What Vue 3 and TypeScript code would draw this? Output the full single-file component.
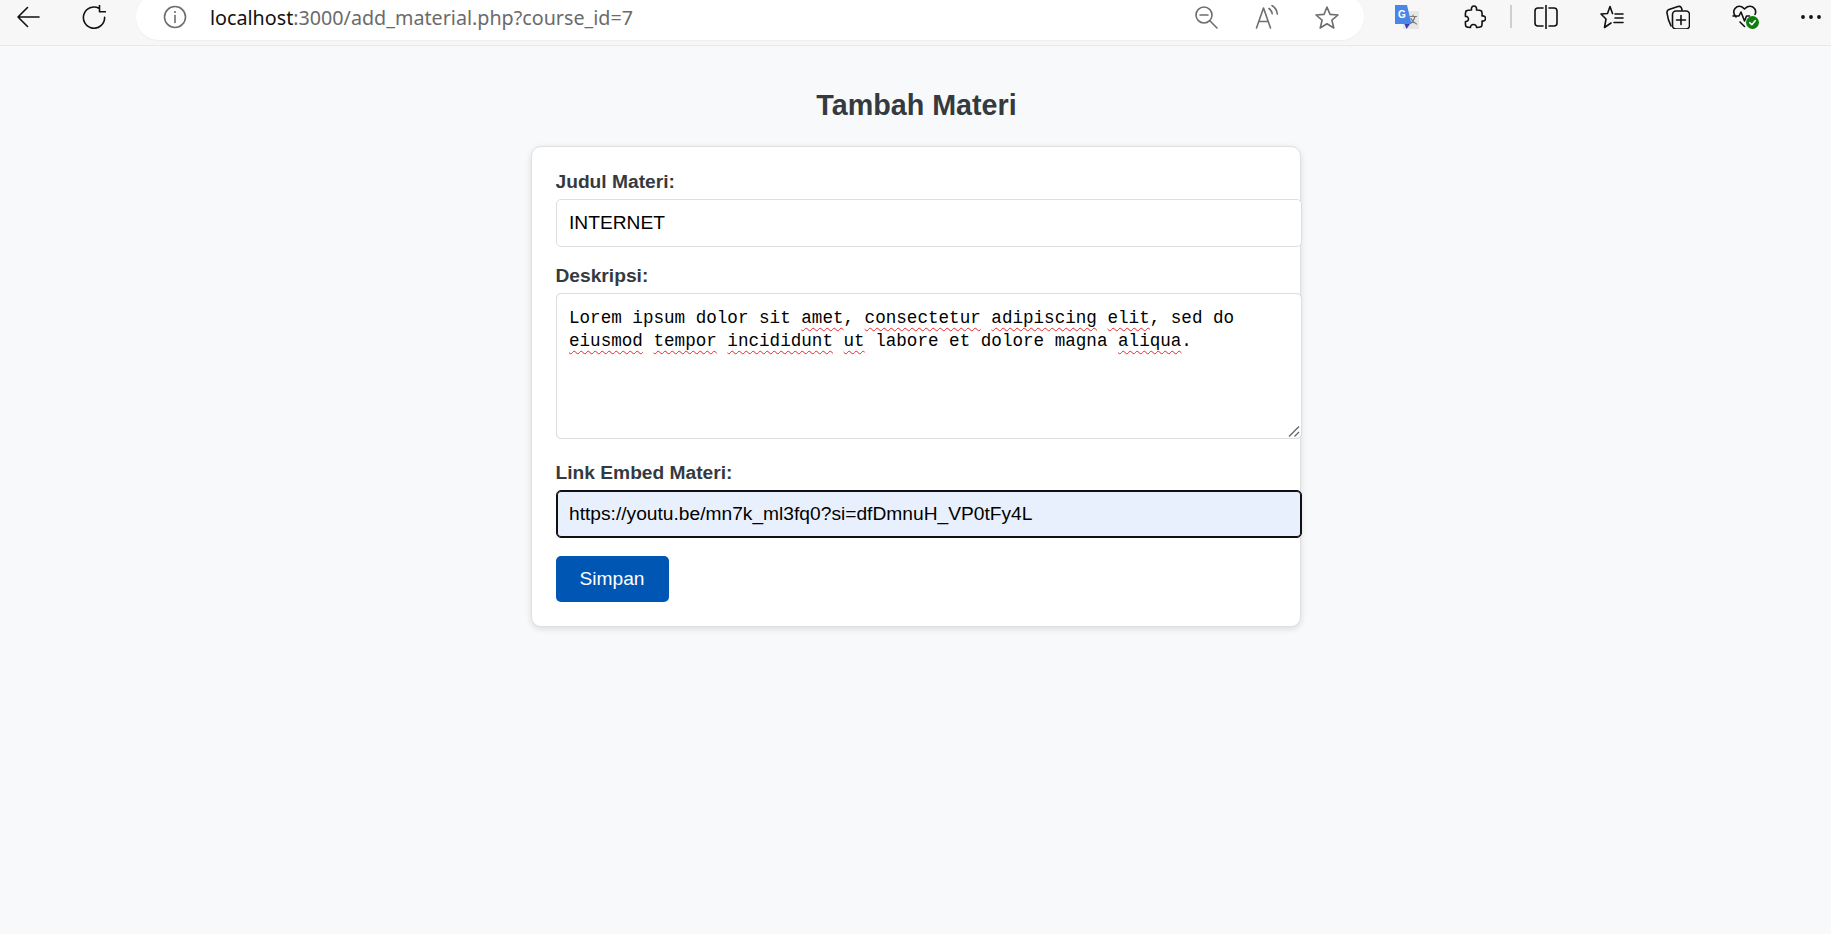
<script setup lang="ts">
import { ref } from 'vue'

const title = ref('INTERNET')
const link = ref('https://youtu.be/mn7k_ml3fq0?si=dfDmnuH_VP0tFy4L')
const description = ref('Lorem ipsum dolor sit amet, consectetur adipiscing elit, sed do eiusmod tempor incididunt ut labore et dolore magna aliqua.')
const misspelled = new Set(['amet', 'consectetur', 'adipiscing', 'elit', 'eiusmod', 'tempor', 'incididunt', 'ut', 'aliqua'])
const pieces = description.value.split(/(\b[a-zA-Z]+\b)/).map((text) => ({ text, bad: misspelled.has(text) }))
</script>

<template>
  <div class="page">
    <header class="toolbar">
      <svg class="ic back" viewBox="0 0 24 24"><path d="M23 12H2M11.500 2.500 2 12l9.500 9.500" /></svg>
      <svg class="ic reload" viewBox="0 0 24 24"><path d="M17 3.300A10.600 10.600 0 1 0 22.600 12.400M17.500 0v6.800h6" /></svg>
      <div class="pill">
        <svg class="ic info" viewBox="0 0 24 24"><circle cx="12" cy="12" r="10.500" /><path d="M12 10.500v7" /><circle class="dot" cx="12" cy="7" r="1.100" /></svg>
        <div class="url"><span class="host">localhost</span>:3000/add_material.php?course_id=7</div>
        <svg class="ic grey" viewBox="0 0 24 24"><circle cx="10" cy="10" r="8" /><path d="M6 10h8M15.800 15.800 23 23" /></svg>
        <svg class="ic grey read" viewBox="0 0 24 24"><path d="M1.500 23 8.500 3l7 20M4 16.500h9M14 3.500c2 1.400 3 3 3.200 5.300M17 .5c3.200 2 5 5 5.300 8.500" /></svg>
        <svg class="ic grey star" viewBox="0 0 24 24"><path d="m12 2 3 7.400 8 .6-6.100 5.200L18.800 23 12 18.800 5.200 23l1.900-7.800L1 10l8-.6Z" /></svg>
      </div>
      <svg class="ic translate" viewBox="0 0 24 24">
        <rect x="8" y="6" width="16" height="18" fill="#e6e6e6" />
        <path d="M15 11.500h6.500M18 10v1.500M20 11.500c-1 4-3 6-5 7M16 13.500c1 2.500 3 4.500 5.500 5.500" stroke="#7b7b7b" stroke-width="1.200" fill="none" />
        <path d="M0 0h12l4.500 19H0Z" fill="#4a86e8" stroke="none" />
        <path d="M9.500 19h5.500l-3.500 5Z" fill="#3c3fb5" stroke="none" />
        <text x="3" y="12.500" class="g">G</text>
      </svg>
      <svg class="ic puzzle" viewBox="0 0 24 24"><path d="M9.500 5C9 2.500 10.500 1 12 1s3 1.500 2.500 4c2 0 4 .3 5 1 .6 1.500.8 3 .5 5 2-.5 3.500.8 3.500 2.500S22 16.500 20 16c.3 2 0 4-.5 5.500-1.500.7-3 1-5 1 .3-1.500-1-3-3-3s-3.300 1.500-3 3c-2 0-3.500-.3-4.500-1-.6-1.500-.8-3-.5-5 1.500.3 3-1 3-2.500S5 11 3.500 11.500c-.3-2 0-4 .5-5.500 1-.7 3-1 5.500-1Z" /></svg>
      <span class="sep"></span>
      <svg class="ic split" viewBox="0 0 24 24"><path d="M12 0v24M9 3H4a3 3 0 0 0-3 3v12a3 3 0 0 0 3 3h5M15 3h5a3 3 0 0 1 3 3v12a3 3 0 0 1-3 3h-5" /></svg>
      <svg class="ic fav" viewBox="0 0 24 24"><path d="M10 1.500 7.500 8.500 1 9l5 5L4.500 22.500l6.500-4.500M10 1.500l2.500 7M15 9h8M15 13h8M14 17.500h9" /></svg>
      <svg class="ic coll" viewBox="0 0 24 24"><path d="M5 21C3 17 1.500 12 1 8c-.2-1.500.5-3 2-3.500L12 1.500c1.500-.4 3 .3 3.500 1.500L16 5" /><rect x="6.500" y="6" width="17" height="18" rx="3.500" /><path d="M15 10.500v9M10.500 15h9" /></svg>
      <svg class="ic heart" viewBox="0 0 27 25">
        <path d="M4 13C1.500 10 1 7 3 4.500 5.500 1.500 9.500 1.500 12.500 5c3-3.500 7.500-3.500 10-.5 1.500 2 1.500 4 .5 6M1 12h6l2-4 3.500 9 2-5h3M8 18l4.500 4.500" />
        <circle cx="20.500" cy="18.500" r="6.500" fill="#107c10" stroke="none" />
        <path d="m17.800 18.700 2 2 3.400-4" stroke="#fff" stroke-width="1.600" />
      </svg>
      <svg class="ic dots" viewBox="0 0 22 6"><circle cx="3" cy="3" r="1.900" /><circle cx="11" cy="3" r="1.900" /><circle cx="19" cy="3" r="1.900" /></svg>
    </header>

    <main class="content">
      <h1>Tambah Materi</h1>
      <form class="card" @submit.prevent>
        <div class="field">
          <label for="judul">Judul Materi:</label>
          <input id="judul" v-model="title" type="text" />
        </div>
        <div class="field">
          <label for="deskripsi">Deskripsi:</label>
          <div class="area-wrap">
            <div class="squiggles" aria-hidden="true"><template v-for="(p, i) in pieces" :key="i"><span :class="{ bad: p.bad }">{{ p.text }}</span></template></div>
            <textarea id="deskripsi" v-model="description" spellcheck="false"></textarea>
            <svg class="grip" viewBox="0 0 12 11" aria-hidden="true"><path d="M1 10.500 11 .5M6.500 10.500 11 6" /></svg>
          </div>
        </div>
        <div class="field">
          <label for="link">Link Embed Materi:</label>
          <input id="link" v-model="link" class="focused" type="text" />
        </div>
        <button type="submit">Simpan</button>
      </form>
    </main>
  </div>
</template>

<style>
html, body { margin: 0; background: #f8f9fa; }
</style>

<style scoped>
.page {
  min-height: 934px;
  background: #f8f9fa;
  font-family: "Liberation Sans", Arial, sans-serif;
  color: #343a40;
}
.toolbar {
  box-sizing: border-box;
  height: 46px;
  padding: 0 0 12px 16px;
  display: flex;
  align-items: center;
  background: #f7f7f7;
  border-bottom: 1px solid #e9e9e9;
  overflow: hidden;
}
.ic {
  flex: none;
  width: 24px;
  height: 24px;
  fill: none;
  stroke: #111;
  stroke-width: 1.600;
  stroke-linecap: round;
  stroke-linejoin: round;
}
.reload { margin-left: 42px; }
.pill {
  flex: none;
  box-sizing: border-box;
  width: 1228px;
  height: 46px;
  margin-left: 30px;
  padding: 0 25px 0 27px;
  display: flex;
  align-items: center;
  background: #fff;
  border-radius: 23px;
  box-shadow: 0 1px 2px rgba(0, 0, 0, 0.04);
}
.info { stroke: #6e6e6e; }
.dot { fill: #6e6e6e; stroke: none; }
.url {
  flex: 1;
  margin-left: 23px;
  padding-top: 2px;
  font-family: "Noto Sans", sans-serif;
  font-size: 19.720px;
  line-height: 26px;
  color: #6b6b6b;
  white-space: nowrap;
}
.host { color: #111; }
.grey { stroke: #6e6e6e; }
.read { margin-left: 37px; }
.star { margin-left: 36px; }
.translate { margin-left: 31px; stroke: none; }
.g { font-family: "Liberation Sans", sans-serif; font-size: 10px; font-weight: 700; fill: #fff; stroke: none; }
.puzzle { margin-left: 43px; }
.sep { flex: none; width: 2px; height: 23px; margin-left: 24px; background: #cfcfcf; }
.split { margin-left: 22px; }
.fav { margin-left: 42px; }
.coll { margin-left: 42px; }
.heart { margin-left: 42px; width: 27px; height: 25px; }
.dots { margin-left: 41px; width: 22px; height: 6px; fill: #111; stroke: none; }

.content { padding-top: 42px; }
h1 {
  margin: 0 0 24px;
  padding-left: 2px;
  font-size: 28.700px;
  line-height: 34px;
  font-weight: 700;
  text-align: center;
  color: #343a40;
}
.card {
  box-sizing: border-box;
  width: 770px;
  margin: 0 auto;
  padding: 24px;
  background: #fff;
  border: 1px solid #e0e0e0;
  border-radius: 10px;
  box-shadow: 0 2px 6px rgba(0, 0, 0, 0.12);
}
.field { margin-bottom: 18px; }
label {
  display: block;
  margin-bottom: 7px;
  font-size: 19.200px;
  line-height: 21px;
  font-weight: 700;
  color: #343a40;
}
input {
  display: block;
  width: 100%;
  height: 46px;
  padding: 0 11.500px 0 12.500px;
  border: 1px solid #dedede;
  border-radius: 5px;
  background: #fff;
  color: #000;
  font-family: "Liberation Sans", Arial, sans-serif;
  font-size: 19.200px;
  outline: none;
}
.focused {
  background: #e8f0fe;
  border-color: #101010;
  box-shadow: inset 0 0 0 1px #101010;
}
.area-wrap {
  position: relative;
  height: 146px;
  margin-bottom: 23px;
}
textarea, .squiggles {
  display: block;
  box-sizing: border-box;
  width: calc(100% + 26px);
  height: 146px;
  margin: 0;
  padding: 13px 12px 9px 12.500px;
  border: 1px solid #dedede;
  border-radius: 5px;
  font-family: "Liberation Mono", monospace;
  font-size: 17.600px;
  line-height: 23px;
  white-space: pre-wrap;
  word-break: normal;
}
textarea {
  position: relative;
  background: transparent;
  color: #000;
  outline: none;
}
textarea::-webkit-resizer { background: transparent; }
.squiggles {
  position: absolute;
  inset: 0 auto auto 0;
  color: transparent;
  background: #fff;
}
.bad {
  text-decoration: underline wavy #e5262b 1.300px;
  text-underline-offset: 4px;
}
.grip {
  position: absolute;
  right: -24px;
  bottom: 2px;
  width: 12px;
  height: 11px;
  fill: none;
  stroke: #666;
  stroke-width: 1.300;
  pointer-events: none;
}
button {
  display: block;
  width: 113px;
  height: 46px;
  padding: 0;
  border: 0;
  border-radius: 5px;
  background: #0056b3;
  color: #fff;
  font-family: "Liberation Sans", Arial, sans-serif;
  font-size: 19.200px;
}
</style>
